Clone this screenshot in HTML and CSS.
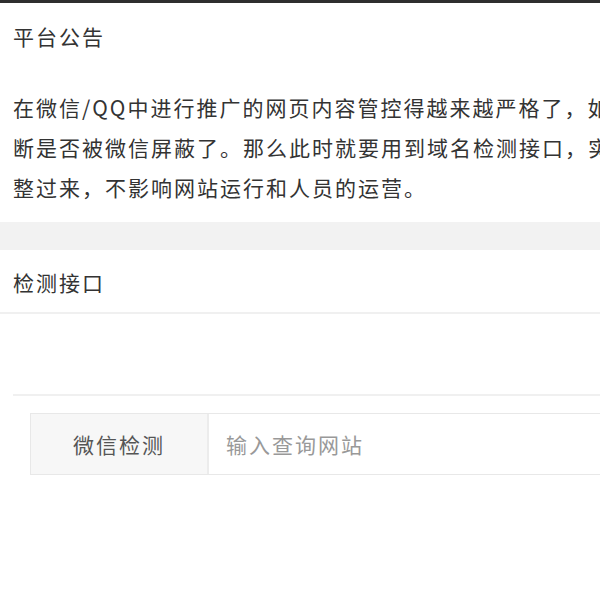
FILE: index.html
```html
<!DOCTYPE html>
<html lang="zh-CN">
<head>
<meta charset="utf-8">
<title>平台公告</title>
<link rel="stylesheet" href="styles.css">
</head>
<body>
<div class="page">
  <section class="card notice">
    <div class="card-title">平台公告</div>
    <div class="notice-body">
      <p class="line">在微信/QQ中进行推广的网页内容管控得越来越严格了，如果被封就无法访问，需要实时判</p>
      <p class="line">断是否被微信屏蔽了。那么此时就要用到域名检测接口，实时检测域名状态并及时调</p>
      <p class="line">整过来，不影响网站运行和人员的运营。</p>
    </div>
  </section>
  <div class="gap"></div>
  <section class="card check">
    <div class="card-title bordered">检测接口</div>
    <div class="check-body">
      <div class="form">
        <div class="input-group">
          <span class="addon">微信检测</span>
          <span class="field">输入查询网站</span>
        </div>
      </div>
    </div>
  </section>
  <div class="gap bottom"></div>
</div>
</body>
</html>
```
FILE: styles.css
```css
* { box-sizing: border-box; }
html, body { margin: 0; padding: 0; background: #fff; }
body {
  font-family: "Noto Sans CJK SC", "Noto Sans", sans-serif;
  color: #333;
  overflow: hidden;
  width: 600px;
  height: 600px;
}
.page {
  border-top: 3px solid #2e2e2e;
  width: 600px;
  height: 600px;
  overflow: hidden;
}
.card { background: #fff; }
.card-title {
  height: 66px;
  line-height: 66px;
  padding-left: 13px;
  font-size: 21px;
  letter-spacing: 2px;
  color: #333;
  white-space: nowrap;
}
.notice-body {
  padding: 18px 0 15px 13px;
}
.line {
  margin: 0;
  height: 40px;
  line-height: 40px;
  font-size: 21px;
  letter-spacing: 2px;
  white-space: nowrap;
  overflow: hidden;
  color: #333;
}
.gap {
  height: 28px;
  background: #f2f2f2;
}
.check .card-title {
  height: 64px;
  line-height: 64px;
}
.bordered { border-bottom: 2px solid #f0f0f0; }
.check-body {
  padding-top: 80px;
  padding-left: 13px;
}
.form {
  border-top: 2px solid #f0f0f0;
  padding: 17px 0 0 17px;
  height: 280px;
}
.input-group {
  display: flex;
  height: 62px;
  border: 1px solid #e8e8e8;
  border-right: none;
}
.addon {
  width: 178px;
  flex: none;
  background: #f7f7f7;
  border-right: 2px solid #ececec;
  display: flex;
  align-items: center;
  justify-content: center;
  font-size: 21px;
  letter-spacing: 2px;
  color: #555;
}
.field {
  flex: 1;
  display: flex;
  align-items: center;
  padding-left: 17px;
  font-size: 21px;
  letter-spacing: 2px;
  color: #999;
}
.bottom { height: 10px; }
```
